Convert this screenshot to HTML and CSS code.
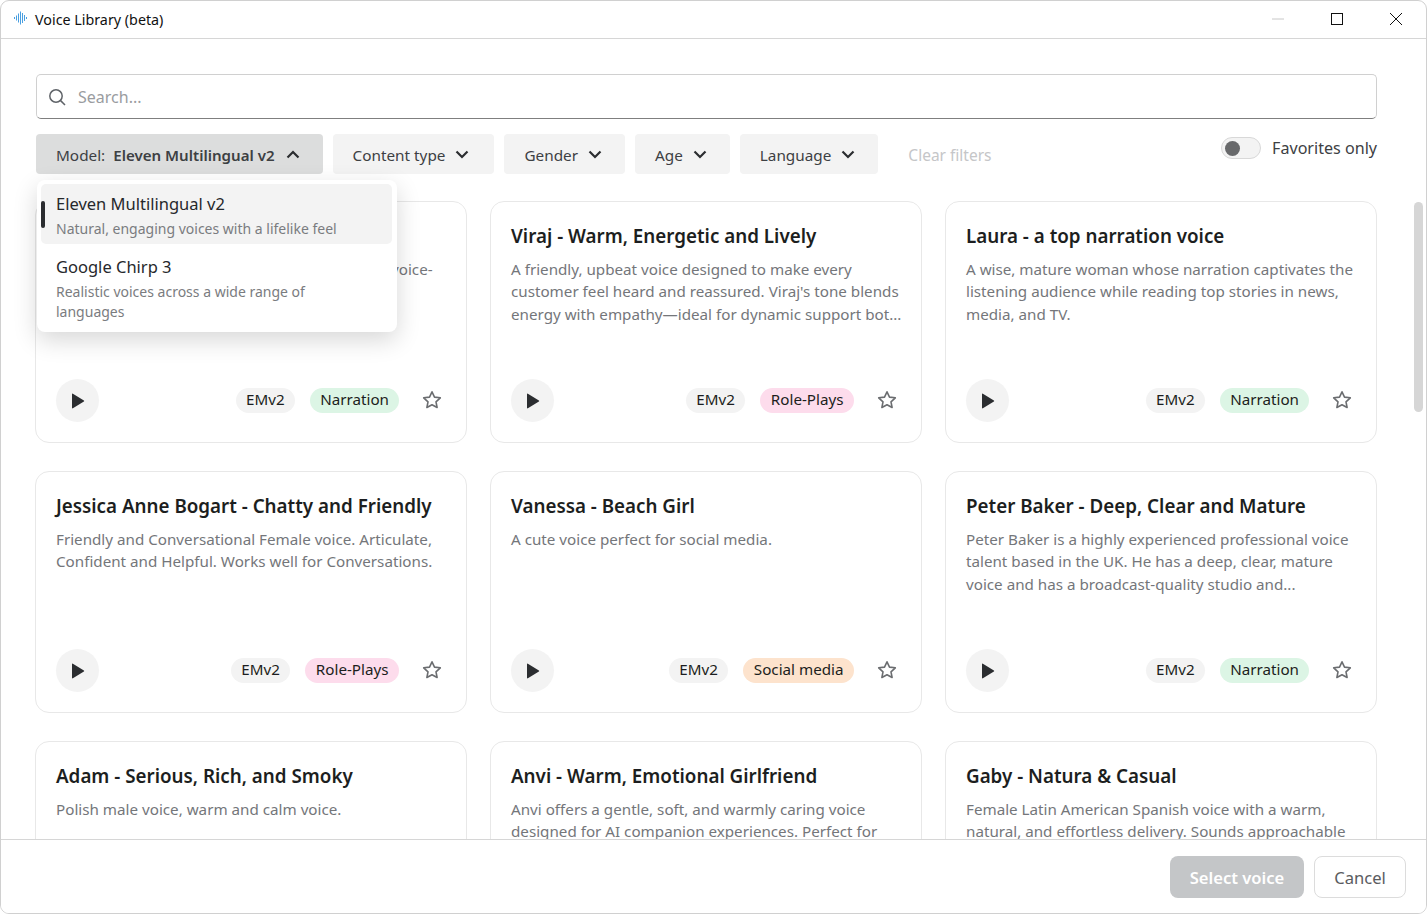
FILE: index.html
```html
<!DOCTYPE html>
<html lang="en">
<head>
  <meta charset="UTF-8" />
  <title>Voice Library (beta)</title>
  <link rel="stylesheet" href="styles.css">
</head>
<body>
  <div class="window">
    <div class="titlebar">
      <svg class="app-icon" width="14" height="14" viewBox="0 0 14 14">
        <path d="M.5 6v2M2.5 4.5v5M4.5 2.5v9M6.5 0.5v13M8.5 2v10M10.5 4v6M12.5 6v2" stroke="#4a9fe0" stroke-width="1" fill="none"/>
      </svg>
      <span class="title">Voice Library (beta)</span>
      <div class="win-controls">
        <svg width="12" height="12" viewBox="0 0 12 12"><path d="M0 6h12" stroke="#c8c8c8"/></svg>
        <svg width="12" height="12" viewBox="0 0 12 12"><rect x=".5" y=".5" width="11" height="11" fill="none" stroke="#111"/></svg>
        <svg width="12" height="12" viewBox="0 0 12 12"><path d="M0 0l12 12M12 0L0 12" stroke="#111"/></svg>
      </div>
    </div>

    <div class="main">
      <div class="search">
        <svg width="18" height="18" viewBox="0 0 18 18" fill="none" stroke="#5f6368" stroke-width="1.5"><circle cx="8" cy="8" r="6.2"/><path d="M12.6 12.6L17 17"/></svg>
        <span>Search...</span>
      </div>

      <div class="filters">
        <div class="filter filter-open">
          <span>Model:</span><b>Eleven Multilingual v2</b>
          <svg class="chev" width="14" height="9" viewBox="0 0 14 9"><path d="M1.5 7.5L7 2l5.5 5.5" /></svg>
        </div>
        <div class="filter filter-content"><span>Content type</span><svg class="chev" width="14" height="9" viewBox="0 0 14 9"><path d="M1.5 1.5L7 7l5.5-5.5" /></svg></div>
        <div class="filter"><span>Gender</span><svg class="chev" width="14" height="9" viewBox="0 0 14 9"><path d="M1.5 1.5L7 7l5.5-5.5" /></svg></div>
        <div class="filter"><span>Age</span><svg class="chev" width="14" height="9" viewBox="0 0 14 9"><path d="M1.5 1.5L7 7l5.5-5.5" /></svg></div>
        <div class="filter"><span>Language</span><svg class="chev" width="14" height="9" viewBox="0 0 14 9"><path d="M1.5 1.5L7 7l5.5-5.5" /></svg></div>
        <span class="clear">Clear filters</span>
        <div class="favorites">
          <div class="toggle"><div class="knob"></div></div>
          <span class="fav-label">Favorites only</span>
        </div>
      </div>

      <div class="dropdown">
        <div class="option selected">
          <div class="marker"></div>
          <div class="option-name">Eleven Multilingual v2</div>
          <div class="option-desc">Natural, engaging voices with a lifelike feel</div>
        </div>
        <div class="option">
          <div class="option-name">Google Chirp 3</div>
          <div class="option-desc">Realistic voices across a wide range of languages</div>
        </div>
      </div>

      <div class="grid" id="grid"></div>
      <div class="scrollbar"></div>
    </div>

    <div class="footer">
      <button class="btn btn-primary">Select voice</button>
      <button class="btn btn-cancel">Cancel</button>
    </div>
  </div>

<script>
  const voices = [
    ["Rachel - Calm and Clear", "A warm, natural American female voice apt for voice-over and narration.", "Narration", "green"],
    ["Viraj - Warm, Energetic and Lively", "A friendly, upbeat voice designed to make every customer feel heard and reassured. Viraj's tone blends energy with empathy—ideal for dynamic support bot...", "Role-Plays", "pink"],
    ["Laura - a top narration voice", "A wise, mature woman whose narration captivates the listening audience while reading top stories in news, media, and TV.", "Narration", "green"],
    ["Jessica Anne Bogart - Chatty and Friendly", "Friendly and Conversational Female voice. Articulate, Confident and Helpful. Works well for Conversations.", "Role-Plays", "pink"],
    ["Vanessa - Beach Girl", "A cute voice perfect for social media.", "Social media", "orange"],
    ["Peter Baker - Deep, Clear and Mature", "Peter Baker is a highly experienced professional voice talent based in the UK. He has a deep, clear, mature voice and has a broadcast-quality studio and...", "Narration", "green"],
    ["Adam - Serious, Rich, and Smoky", "Polish male voice, warm and calm voice.", "Narration", "green"],
    ["Anvi - Warm, Emotional Girlfriend", "Anvi offers a gentle, soft, and warmly caring voice designed for AI companion experiences. Perfect for", "Role-Plays", "pink"],
    ["Gaby - Natura & Casual", "Female Latin American Spanish voice with a warm, natural, and effortless delivery. Sounds approachable", "Narration", "green"]
  ];

  const grid = document.getElementById("grid");
  voices.forEach(v => {
    const card = document.createElement("div");
    card.className = "card";
    card.innerHTML = `
      <h3></h3>
      <p></p>
      <div class="card-footer">
        <div class="play"><svg width="14" height="16" viewBox="0 0 14 16"><path d="M1 1.2v13.6c0 .5.5.8.9.5l11-6.8c.4-.2.4-.8 0-1L1.9.7C1.500.4 1 .7 1 1.200z" fill="#2b2d30"/></svg></div>
        <span class="tag tag-gray">EMv2</span>
        <span class="tag tag-${v[3]}"></span>
        <svg class="star" width="20" height="20" viewBox="0 0 20 20"><path d="M10 1.800l2.500 5.300 5.800.7-4.300 4 1.100 5.700-5.100-2.800-5.100 2.800 1.100-5.700-4.300-4 5.800-.7z" fill="none" stroke="#6b6d70" stroke-width="1.600" stroke-linejoin="round"/></svg>
      </div>`;
    card.querySelector("h3").textContent = v[0];
    card.querySelector("p").textContent = v[1];
    card.querySelector(".tag-" + v[3]).textContent = v[2];
    grid.appendChild(card);
  });
</script>
</body>
</html>
```

FILE: styles.css
```css
* {
  box-sizing: border-box;
}

html, body {
  margin: 0;
  padding: 0;
  height: 914px;
  overflow: hidden;
  background: #fff;
}

body {
  font-family: "Noto Sans", sans-serif;
  color: #26282b;
}

.window {
  height: 914px;
  border: 1px solid #d0d0d0;
  border-radius: 9px;
  display: flex;
  flex-direction: column;
  overflow: hidden;
  background: #fff;
}

.titlebar {
  height: 38px;
  flex: none;
  display: flex;
  align-items: center;
  padding-left: 13px;
  border-bottom: 1px solid #d6d6d6;
}

.app-icon {
  margin-right: 7px;
  margin-top: -3px;
}

.title {
  font-size: 14.3px;
  color: #111;
}

.win-controls {
  margin-left: auto;
  display: flex;
  gap: 47px;
  padding: 0 24px 2px 0;
}

.main {
  flex: 1;
  position: relative;
  overflow: hidden;
  padding: 35px 49px 0 35px;
}

.search {
  height: 45px;
  border: 1px solid #d0d0d0;
  border-bottom: 1px solid #7f7f7f;
  border-radius: 5px;
  display: flex;
  align-items: center;
  gap: 12px;
  padding-left: 11px;
  font-size: 16px;
  color: #9a9c9f;
}

.filters {
  display: flex;
  align-items: flex-start;
  gap: 10px;
  margin-top: 15px;
  height: 40px;
}

.filter {
  height: 40px;
  padding: 0 23px 0 20px;
  display: flex;
  align-items: center;
  gap: 10px;
  background: #f3f3f3;
  border-radius: 4px;
  font-size: 15.3px;
  color: #3d4043;
}

.filter span,
.filter b {
  margin-top: 1px;
}

.filter-content {
  padding-right: 25px;
}

.filter-open {
  background: #dcdddd;
  gap: 8px;
}

.filter-open b {
  font-size: 15.1px;
  font-weight: 600;
}

.filter-open .chev {
  margin-left: 3px;
}

.chev {
  fill: none;
  stroke: #2b2d30;
  stroke-width: 2.2;
}

.clear {
  margin-left: 20px;
  line-height: 43px;
  font-size: 15.5px;
  color: #c5c6c8;
}

.favorites {
  margin-left: auto;
  margin-top: 2px;
  display: flex;
  align-items: center;
  gap: 11px;
  font-size: 16.1px;
  color: #3d4043;
}

.fav-label {
  margin-top: 1px;
}

.toggle {
  width: 40px;
  height: 22px;
  border: 1px solid #d8d8d8;
  border-radius: 11px;
  background: #f3f3f3;
  padding: 3px;
}

.knob {
  width: 15px;
  height: 15px;
  border-radius: 50%;
  background: #68696b;
}

.dropdown {
  position: absolute;
  left: 36px;
  top: 141px;
  width: 360px;
  height: 152px;
  padding: 4px 5px 4px 4px;
  background: #fff;
  border-radius: 8px;
  box-shadow: 0 8px 24px rgba(0, 0, 0, 0.16);
  z-index: 5;
}

.option {
  position: relative;
  padding: 9px 15px 8px;
  border-radius: 5px;
}

.option.selected {
  height: 60px;
  padding-top: 8px;
  background: #f3f3f3;
  margin-bottom: 2px;
}

.marker {
  position: absolute;
  left: 0;
  top: 17px;
  width: 4px;
  height: 27px;
  border-radius: 2px;
  background: #2b2d30;
}

.option-name {
  font-size: 16.5px;
  line-height: 24px;
}

.option-desc {
  max-width: 300px;
  margin-top: 3px;
  font-size: 14px;
  line-height: 20px;
  color: #7a7c80;
}

.grid {
  display: grid;
  grid-template-columns: repeat(3, 432px);
  gap: 28px 23px;
  margin: 27px 0 0 -1px;
}

.card {
  height: 242px;
  border: 1px solid #e8e8e8;
  border-radius: 14px;
  padding: 20px;
  display: flex;
  flex-direction: column;
}

.card h3 {
  margin: 0;
  font-size: 18.8px;
  line-height: 28px;
  font-weight: 600;
  color: #1c1e20;
}

.card p {
  margin: 7.9px -6px 0 0;
  font-size: 15.2px;
  line-height: 22.5px;
  color: #74767a;
}

.card-footer {
  margin-top: auto;
  display: flex;
  align-items: center;
  justify-content: flex-end;
  gap: 15px;
}

.play {
  width: 43px;
  height: 43px;
  border-radius: 50%;
  background: #f3f3f3;
  display: flex;
  align-items: center;
  justify-content: center;
  margin-right: auto;
}

.tag {
  height: 25px;
  line-height: 23px;
  padding: 0 10.5px;
  border-radius: 13px;
  font-size: 15.2px;
  color: #1c1e20;
}

.tag-gray { background: #f3f3f3; }
.tag-green { background: #dcf5e5; padding: 0 10px; }
.tag-pink { background: #fddcec; }
.tag-orange { background: #fde3cd; }

.star {
  margin: 0 4px 2px 8px;
}

.scrollbar {
  position: absolute;
  right: 3px;
  top: 163px;
  width: 9px;
  height: 210px;
  border-radius: 5px;
  background: #d6d6d6;
}

.footer {
  flex: none;
  height: 74px;
  position: relative;
  border-top: 1px solid #d6d6d6;
  background: #fff;
  display: flex;
  align-items: flex-start;
  justify-content: flex-end;
  gap: 10px;
  padding: 16px 20px 0 0;
}

.btn {
  height: 42px;
  border-radius: 8px;
  font-family: inherit;
  font-size: 16.6px;
}

.btn-primary {
  width: 134px;
  border: none;
  background: #c4c6c8;
  color: #fff;
  font-weight: 600;
}

.btn-cancel {
  width: 92px;
  border: 1px solid #dcdcdc;
  background: #fff;
  color: #5a5c60;
}
```
